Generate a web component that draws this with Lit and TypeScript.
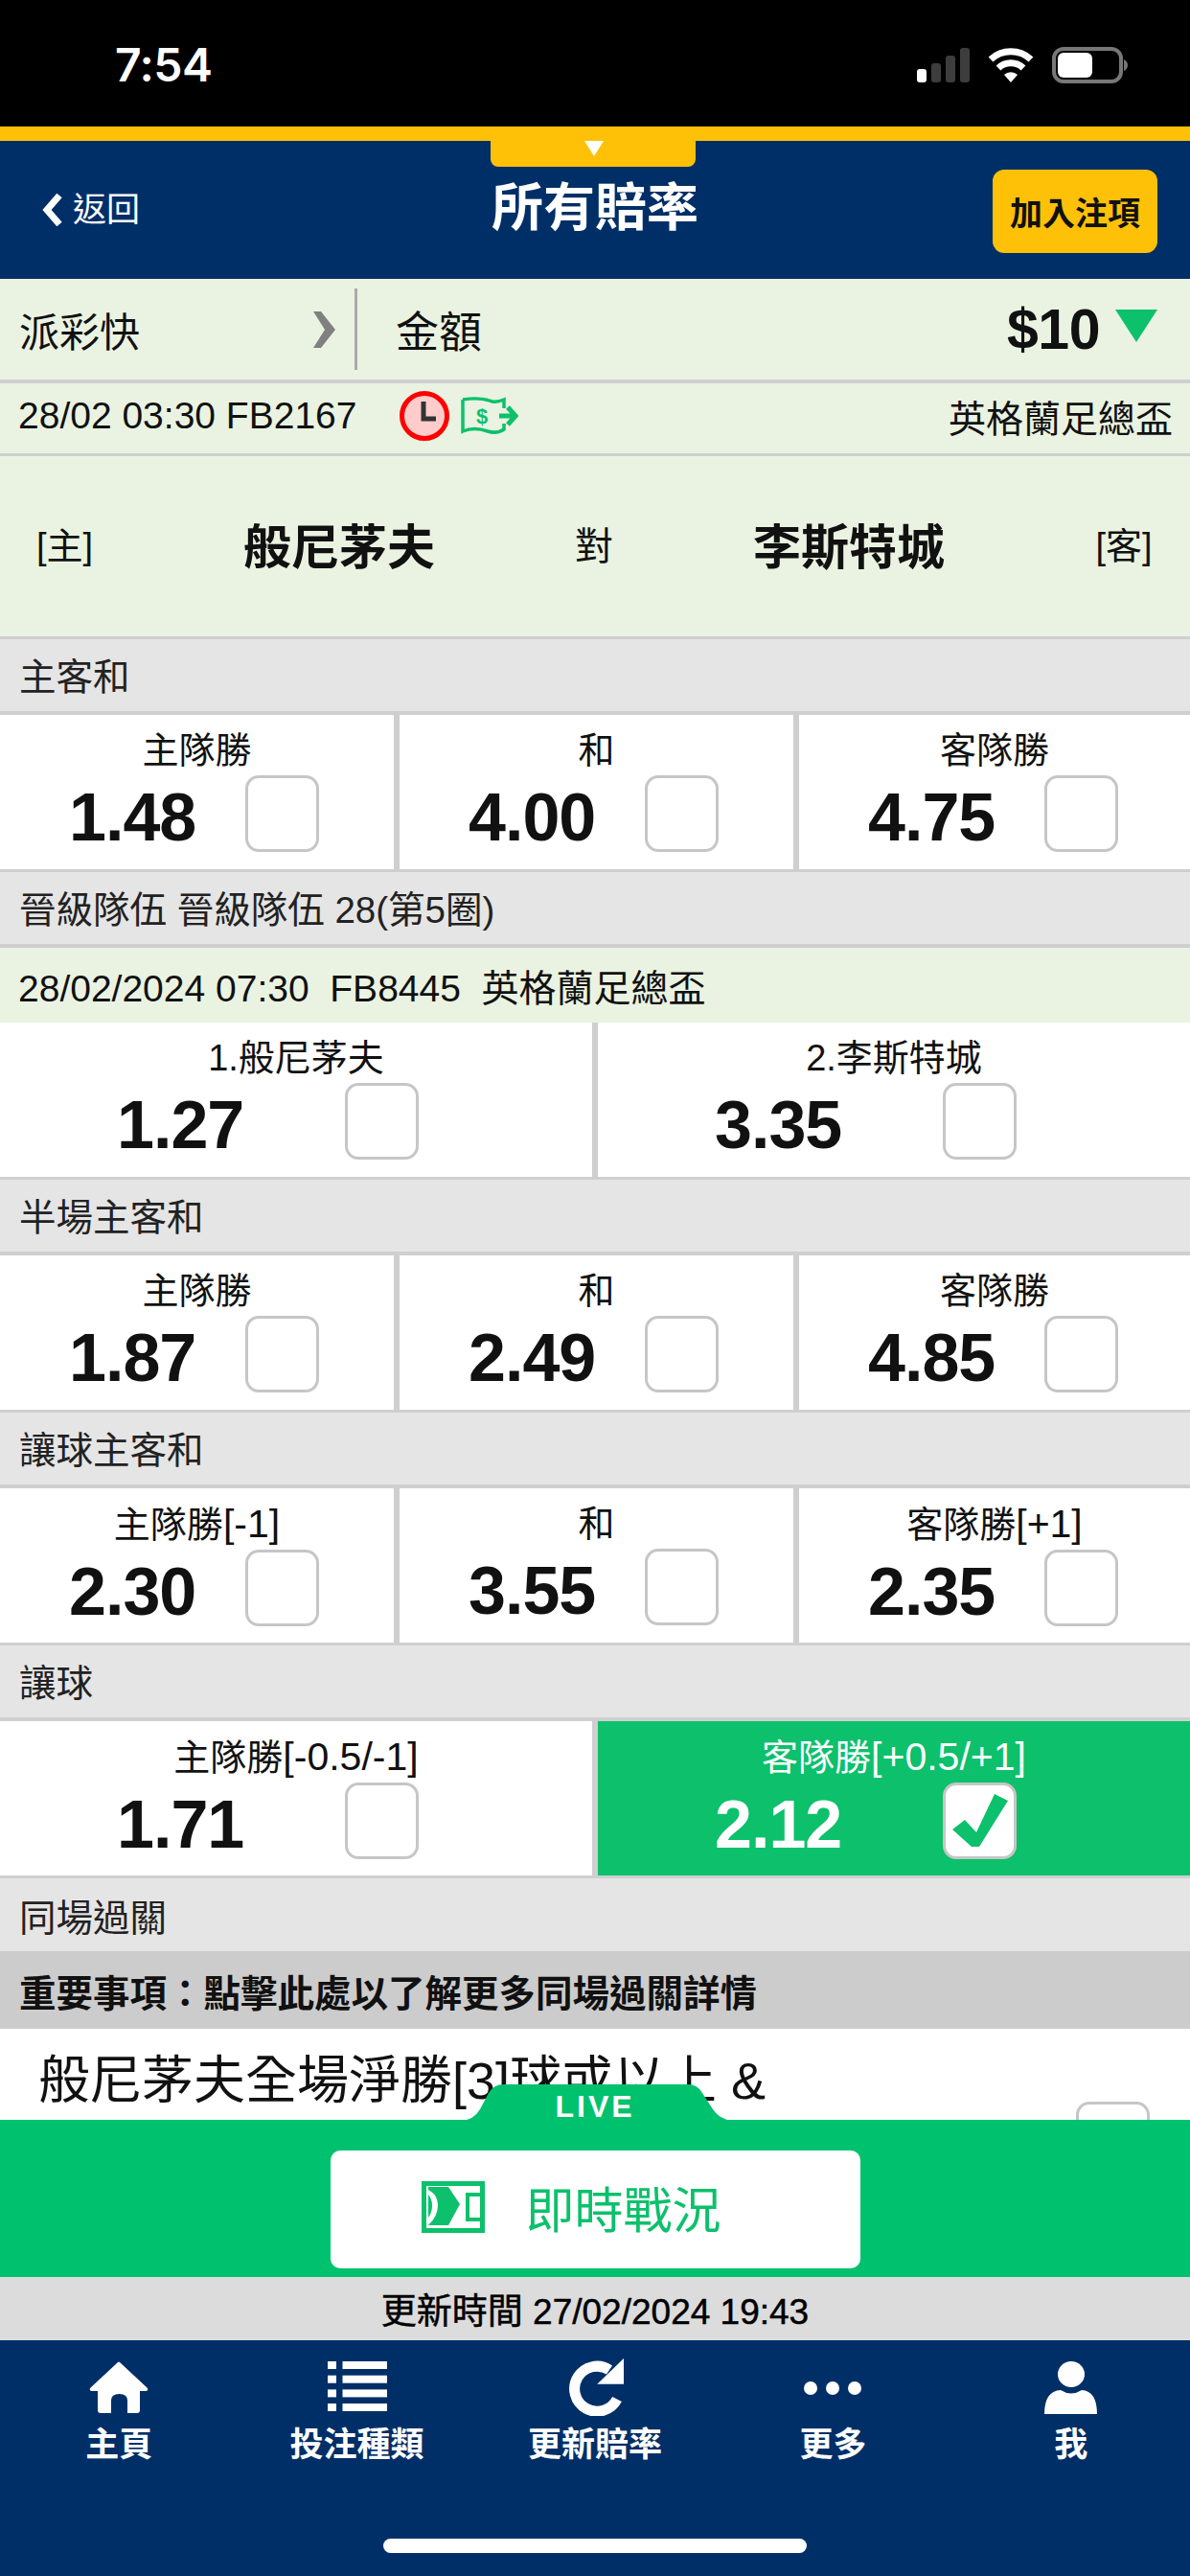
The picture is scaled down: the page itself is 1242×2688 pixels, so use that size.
import { LitElement, css, html, svg } from 'lit';
import { customElement } from 'lit/decorators.js';

type Cell = { label: string; hdcp?: string; odds: string; checked?: boolean };
type Market = { title: string; cells: Cell[]; sub?: string };

const markets: Market[] = [
  {
    title: '主客和',
    cells: [
      { label: '主隊勝', odds: '1.48' },
      { label: '和', odds: '4.00' },
      { label: '客隊勝', odds: '4.75' },
    ],
  },
  {
    title: '晉級隊伍 晉級隊伍 28(第5圈)',
    sub: '28/02/2024 07:30\u00a0 FB8445\u00a0 英格蘭足總盃',
    cells: [
      { label: '1.般尼茅夫', odds: '1.27' },
      { label: '2.李斯特城', odds: '3.35' },
    ],
  },
  {
    title: '半場主客和',
    cells: [
      { label: '主隊勝', odds: '1.87' },
      { label: '和', odds: '2.49' },
      { label: '客隊勝', odds: '4.85' },
    ],
  },
  {
    title: '讓球主客和',
    cells: [
      { label: '主隊勝', hdcp: '[-1]', odds: '2.30' },
      { label: '和', odds: '3.55' },
      { label: '客隊勝', hdcp: '[+1]', odds: '2.35' },
    ],
  },
  {
    title: '讓球',
    cells: [
      { label: '主隊勝', hdcp: '[-0.5/-1]', odds: '1.71' },
      { label: '客隊勝', hdcp: '[+0.5/+1]', odds: '2.12', checked: true },
    ],
  },
];

const navItems = [
  {
    label: '主頁',
    icon: svg`<path transform="translate(2 3)" d="M29 1 Q30 0 31 1 L60 28 Q61 31 58 31 H52 V51 Q52 54 49 54 H39 V41 Q39 34 30.500 34 Q22 34 22 41 V54 H11 Q8 54 8 51 V31 H2 Q-1 31 0 28 Z" fill="#fff"/>`,
  },
  {
    label: '投注種類',
    icon: svg`<g fill="#fff" transform="translate(1 3)"><rect x="0" y="0" width="9" height="8"/><rect x="15.500" y="0" width="46.500" height="8"/><rect x="0" y="14.700" width="9" height="8"/><rect x="15.500" y="14.700" width="46.500" height="8"/><rect x="0" y="29.400" width="9" height="8"/><rect x="15.500" y="29.400" width="46.500" height="8"/><rect x="0" y="44" width="9" height="8"/><rect x="15.500" y="44" width="46.500" height="8"/></g>`,
  },
  {
    label: '更新賠率',
    icon: svg`<path d="M55 42.500 A23.500 23.500 0 1 1 47 12" fill="none" stroke="#fff" stroke-width="11"/><path d="M62 0 V26.700 H34.300 Z" fill="#fff"/>`,
  },
  {
    label: '更多',
    icon: svg`<g fill="#fff"><circle cx="9" cy="31" r="7"/><circle cx="32" cy="31" r="7"/><circle cx="55" cy="31" r="7"/></g>`,
  },
  {
    label: '我',
    icon: svg`<g fill="#fff" transform="translate(4 3)"><ellipse cx="28" cy="13.500" rx="14" ry="13.500"/><path d="M0 55 Q0 31 17 30 Q28 37 39 30 Q55 31 55 55 Z"/></g>`,
  },
];

@customElement('app-root')
export class AppRoot extends LitElement {
  static styles = css`
    :host {
      display: block;
      width: 1242px;
      height: 2688px;
      font-family: 'Liberation Sans', 'Noto Sans CJK TC', sans-serif;
      color: #111;
    }
    .page {
      position: relative;
      width: 1242px;
      height: 2688px;
      display: flex;
      flex-direction: column;
      overflow: hidden;
      background: #fff;
    }

    /* status bar */
    .status {
      flex: none;
      height: 132px;
      background: #000;
      color: #fff;
      display: flex;
      align-items: flex-start;
      padding: 40px 64px 0 120px;
      box-sizing: border-box;
    }
    .time {
      font-family: Inter, 'Liberation Sans', sans-serif;
      font-size: 48px;
      font-weight: 600;
      line-height: 56px;
      letter-spacing: -0.5px;
    }
    .status-icons {
      margin-left: auto;
      margin-top: 9px;
      display: flex;
      gap: 19px;
      align-items: center;
    }

    /* title bar */
    .topline {
      flex: none;
      height: 15px;
      background: #ffc107;
    }
    .pull-tab {
      position: absolute;
      left: 512px;
      top: 147px;
      width: 214px;
      height: 27px;
      background: #ffc107;
      border-radius: 0 0 8px 8px;
    }
    .pull-tab::after {
      content: '';
      position: absolute;
      left: 98px;
      top: 0;
      border-left: 10px solid transparent;
      border-right: 10px solid transparent;
      border-top: 16px solid #fff;
    }
    .titlebar {
      flex: none;
      height: 144px;
      background: #002f67;
      color: #fff;
      display: grid;
      grid-template-columns: 1fr auto 1fr;
      align-items: center;
    }
    .back {
      display: flex;
      align-items: center;
      gap: 10px;
      padding-left: 44px;
      font-size: 35px;
      line-height: 40px;
    }
    .title {
      font-size: 54px;
      font-weight: 700;
      line-height: 60px;
      padding-bottom: 4px;
    }
    .add {
      justify-self: end;
      margin: 3px 34px 0 0;
      width: 172px;
      height: 87px;
      border-radius: 12px;
      background: #ffc107;
      color: #111;
      font-size: 34px;
      font-weight: 700;
      display: flex;
      align-items: center;
      justify-content: center;
    }

    /* bet bar */
    .green {
      background: #eaf3e1;
    }
    .betbar {
      flex: none;
      height: 105px;
      border-bottom: 4px solid #cfcfcf;
      display: flex;
      align-items: center;
      font-size: 42px;
    }
    .fast {
      width: 370px;
      height: 85px;
      box-sizing: border-box;
      padding: 0 20px 0 20px;
      display: flex;
      align-items: center;
      justify-content: space-between;
    }
    .bar-div {
      width: 3px;
      height: 85px;
      background: #aaa;
    }
    .amount {
      flex: 1;
      display: flex;
      align-items: center;
      padding: 0 34px 0 40px;
    }
    .amount span {
      font-size: 45px;
    }
    .amount b {
      margin-left: auto;
      font-size: 59px;
      letter-spacing: -0.5px;
    }
    .down {
      margin: -8px 0 0 16px;
      border-left: 22px solid transparent;
      border-right: 22px solid transparent;
      border-top: 34px solid #0cc06c;
    }
    .info {
      flex: none;
      height: 67px;
      border-bottom: 3px solid #cfcfcf;
      display: flex;
      align-items: center;
      padding: 0 18px 6px 19px;
      font-size: 39px;
    }
    .info .code {
      width: 398px;
      white-space: nowrap;
    }
    .info .cup {
      margin-left: auto;
    }
    .money {
      margin-left: 12px;
    }
    .teams {
      flex: none;
      height: 191px;
      box-sizing: border-box;
      padding: 0 0 7px 38px;
      border-bottom: 3px solid #cfcfcf;
      display: grid;
      grid-template-columns: 58px 504px 40px 492px 82px;
      align-items: center;
      text-align: center;
      font-size: 38px;
    }
    .teams b {
      font-size: 50px;
    }
    .teams b.home {
      padding-left: 12px;
    }
    .teams .vs {
      font-size: 40px;
    }

    /* markets */
    .scroll {
      flex: 1;
      min-height: 0;
      overflow: hidden;
    }
    .head {
      height: 72.5px;
      background: #e5e5e5;
      border-bottom: 4px solid #cfcfcf;
      display: flex;
      align-items: center;
      padding: 0 0 2px 20px;
      font-size: 38.5px;
      color: #222;
    }
    .head.plain {
      height: 76px;
      border-bottom: 0;
      padding-bottom: 0;
    }
    .sub {
      height: 78px;
      display: flex;
      align-items: center;
      padding-left: 19px;
      font-size: 39px;
      white-space: nowrap;
    }
    .cells {
      display: grid;
      gap: 0 6px;
      background: #cfcfcf;
      border-bottom: 3px solid #cfcfcf;
    }
    .cells.n3 {
      grid-template-columns: 411px 411px 1fr;
    }
    .cells.n2 {
      grid-template-columns: 1fr 1fr;
    }
    .cell {
      height: 161.5px;
      background: #fff;
      box-sizing: border-box;
      padding-top: 14px;
    }
    .cell.on {
      background: #0cc06c;
      color: #fff;
    }
    .cell .label {
      text-align: center;
      font-size: 38px;
      line-height: 46px;
      white-space: nowrap;
    }
    .cell .label i {
      font-style: normal;
      font-size: 41px;
    }
    .cell .row {
      display: flex;
      margin-top: 3px;
      align-items: flex-start;
    }
    .odds {
      box-sizing: border-box;
      font-size: 70px;
      font-weight: 700;
      line-height: 88px;
      letter-spacing: -1px;
    }
    .n3 .odds {
      width: 256px;
      padding-left: 72px;
    }
    .n2 .odds {
      width: 360px;
      padding-left: 122px;
    }
    .check {
      width: 77px;
      height: 80px;
      box-sizing: border-box;
      border: 3px solid #c6c6c6;
      border-radius: 14px;
      background: #fff;
      display: flex;
      align-items: center;
      justify-content: center;
    }
    .notice {
      height: 81px;
      background: #ccc;
      display: flex;
      align-items: center;
      padding-left: 20px;
      font-size: 38.5px;
      font-weight: 700;
    }
    .parlay {
      position: relative;
      padding: 20px 380px 0 40px;
      font-size: 54px;
      line-height: 69px;
    }
    .parlay .check {
      position: absolute;
      right: 42px;
      top: 76px;
    }

    /* live dock */
    .live-tab {
      position: absolute;
      z-index: 2;
      isolation: isolate;
      left: 480px;
      top: 2175px;
      width: 282px;
      height: 38px;
      color: #fff;
      font-size: 32px;
      font-weight: 700;
      letter-spacing: 3px;
      text-align: center;
      line-height: 47px;
    }
    .live-tab svg {
      position: absolute;
      left: 0;
      top: 0;
      z-index: -1;
    }
    .live {
      position: relative;
      flex: none;
      height: 164px;
      background: #00c16e;
      display: flex;
      justify-content: center;
      align-items: flex-end;
      padding-bottom: 9px;
      box-sizing: border-box;
    }
    .live-btn {
      width: 553px;
      height: 123px;
      background: #fff;
      border-radius: 10px;
      display: flex;
      align-items: center;
      gap: 43px;
      padding: 0 0 6px 95px;
      box-sizing: border-box;
      color: #0cc06c;
      font-size: 51px;
    }
    .update {
      flex: none;
      height: 66px;
      background: #dcdcdc;
      display: flex;
      align-items: center;
      justify-content: center;
      font-size: 37px;
      color: #000;
      -webkit-text-stroke: 0.5px #000;
    }

    /* bottom nav */
    .nav {
      position: relative;
      flex: none;
      height: 246px;
      background: #002f67;
      color: #fff;
      display: grid;
      grid-template-columns: repeat(5, 1fr);
      align-content: start;
    }
    .nav-item {
      display: flex;
      flex-direction: column;
      align-items: center;
      font-size: 35px;
      font-weight: 700;
      line-height: 40px;
    }
    .nav-icon {
      height: 60px;
      margin: 19px 0 10px;
    }
    .homebar {
      position: absolute;
      left: 400px;
      top: 207px;
      width: 442px;
      height: 15px;
      border-radius: 8px;
      background: #fff;
    }
  `;

  renderCell(c: Cell) {
    return html`
      <div class="cell ${c.checked ? 'on' : ''}">
        <div class="label">${c.label}${c.hdcp ? html`<i>${c.hdcp}</i>` : ''}</div>
        <div class="row">
          <div class="odds">${c.odds}</div>
          <div class="check">
            ${c.checked
              ? html`<svg width="58" height="55" viewBox="0 0 58 55"><path d="M0 37 L13 27 L25 40 L44 0 L58 7 L28 55 H20 Z" fill="#0cc06c" /></svg>`
              : ''}
          </div>
        </div>
      </div>
    `;
  }

  renderMarket(m: Market) {
    return html`
      <div class="head">${m.title}</div>
      ${m.sub ? html`<div class="sub green">${m.sub}</div>` : ''}
      <div class="cells n${m.cells.length}">${m.cells.map((c) => this.renderCell(c))}</div>
    `;
  }

  render() {
    return html`
      <div class="page">
        <div class="status">
          <div class="time">7:54</div>
          <div class="status-icons">
            <svg width="55" height="36" viewBox="0 0 55 36">
              <rect x="0" y="22" width="10" height="14" rx="3" fill="#fff" />
              <rect x="15" y="16" width="10" height="20" rx="3" fill="#3d3d3d" />
              <rect x="30" y="8" width="10" height="28" rx="3" fill="#3d3d3d" />
              <rect x="45" y="0" width="10" height="36" rx="3" fill="#3d3d3d" />
            </svg>
            <svg width="48" height="36" viewBox="0 0 48 36">
              <path d="M3 12 A31 31 0 0 1 45 12" fill="none" stroke="#fff" stroke-width="7" />
              <path d="M11 21 A19 19 0 0 1 37 21" fill="none" stroke="#fff" stroke-width="7" />
              <path d="M17 28 L24 36 L31 28 A10 10 0 0 0 17 28 Z" fill="#fff" />
            </svg>
            <svg width="80" height="38" viewBox="0 0 80 38">
              <rect x="2" y="2" width="70" height="34" rx="10" fill="none" stroke="#777" stroke-width="4" />
              <rect x="6" y="6" width="36" height="26" rx="6" fill="#fff" />
              <path d="M75 13 Q79 15 79 19 Q79 23 75 25 Z" fill="#777" />
            </svg>
          </div>
        </div>
        <div class="topline"></div>
        <div class="titlebar">
          <div class="back">
            <svg width="22" height="34" viewBox="0 0 22 34"><path d="M18 2 L5 17 L18 32" fill="none" stroke="#fff" stroke-width="7" /></svg>
            <span>返回</span>
          </div>
          <div class="title">所有賠率</div>
          <div class="add">加入注項</div>
        </div>
        <div class="betbar green">
          <div class="fast">
            <span>派彩快</span>
            <svg width="23" height="38" viewBox="0 0 23 38"><path d="M0 0 H8 L23 19 L8 38 H0 L12 19 Z" fill="#808080" /></svg>
          </div>
          <div class="bar-div"></div>
          <div class="amount">
            <span>金額</span>
            <b>$10</b>
            <div class="down"></div>
          </div>
        </div>
        <div class="info green">
          <div class="code">28/02 03:30 FB2167</div>
          <svg width="52" height="54" viewBox="0 0 52 54">
            <circle cx="26" cy="27" r="23.500" fill="#ffcccc" stroke="#f00" stroke-width="5" />
            <path d="M25 12 V30 H38" fill="none" stroke="#333" stroke-width="5" />
          </svg>
          <svg class="money" width="60" height="40" viewBox="0 0 60 40">
            <path d="M2 3 Q20 0 33 5 Q38 6 45 3 V12 M45 28 V34 Q38 39 28 36 Q14 31 2 36 V3" fill="none" stroke="#0cc06c" stroke-width="3.500" />
            <path d="M40 20 H56 M49 11 L57 20 L49 29" fill="none" stroke="#0cc06c" stroke-width="5" />
            <text x="16" y="28" font-size="22" font-weight="700" fill="#0cc06c" font-family="Liberation Sans">$</text>
          </svg>
          <div class="cup">英格蘭足總盃</div>
        </div>
        <div class="teams green">
          <span>[主]</span>
          <b class="home">般尼茅夫</b>
          <span class="vs">對</span>
          <b>李斯特城</b>
          <span>[客]</span>
        </div>
        <div class="scroll">
          ${markets.map((m) => this.renderMarket(m))}
          <div class="head plain">同場過關</div>
          <div class="notice">重要事項：點擊此處以了解更多同場過關詳情</div>
          <div class="parlay">
            般尼茅夫全場淨勝[3]球或以上 &amp; 半場賠率[2]或全部入球
            <div class="check"></div>
          </div>
        </div>
        <div class="live-tab">
          <svg width="288" height="38" viewBox="0 0 288 38"><path d="M0 38 Q14 38 21 26 L30 9 Q35 0 46 0 H238 Q248 0 253 9 L264 26 Q272 38 288 38 Z" fill="#00c16e" /></svg>
          LIVE
        </div>
        <div class="live">
          <div class="live-btn">
            <svg width="66" height="54" viewBox="0 0 66 54">
              <path d="M2.500 2.500 H63.500 V51.500 H2.500 Z" fill="none" stroke="#0cc06c" stroke-width="5" />
              <path d="M7 6 H28 L40 24 L28 46 H7 Q17 37 17 25 Q17 14 7 9 Z" fill="#0cc06c" />
              <path d="M7 14 Q11 19 11 25 Q11 33 7 38 Z" fill="#0cc06c" />
              <path d="M62 14 H48 V40 H62" fill="none" stroke="#0cc06c" stroke-width="4" />
            </svg>
            <span>即時戰況</span>
          </div>
        </div>
        <div class="update">更新時間 27/02/2024 19:43</div>
        <div class="nav">
          ${navItems.map(
            (n) => html`
              <div class="nav-item">
                <svg class="nav-icon" width="64" height="60" viewBox="0 0 64 60">${n.icon}</svg>
                <span>${n.label}</span>
              </div>
            `,
          )}
          <div class="homebar"></div>
        </div>
        <div class="pull-tab"></div>
      </div>
    `;
  }
}
